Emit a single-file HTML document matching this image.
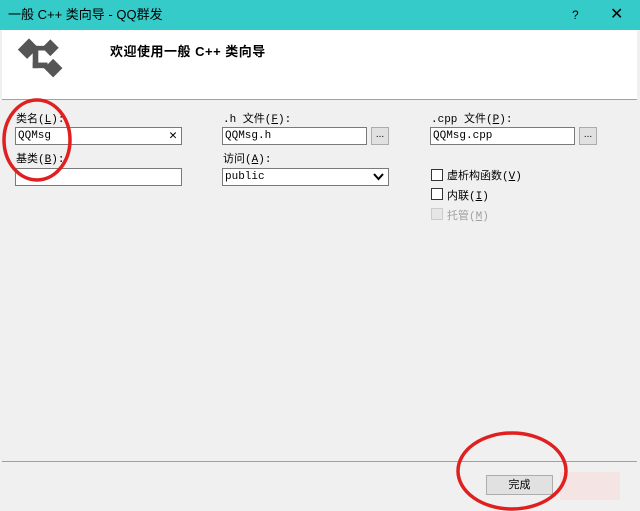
<!DOCTYPE html>
<html><head><meta charset="utf-8"><style>
*{margin:0;padding:0;box-sizing:border-box}
body{width:640px;height:511px;overflow:hidden;background:#f0f0f0;font-family:"Liberation Sans","Noto Sans CJK SC",sans-serif;font-size:12px;color:#000;position:relative}
.a{position:absolute}
.title{left:0;top:0;width:640px;height:30px;background:#35cbc9;color:#000;font-size:13px;line-height:30px;padding-left:8px}
.bl{left:0;top:30px;width:2px;height:481px;background:#35cbc9}
.head{left:2px;top:30px;width:635px;height:70px;background:#fff;border-bottom:1px solid #a0a0a0}
.lbl{font-size:11px;font-family:"Liberation Mono","Noto Sans CJK SC",monospace}
.inp{background:#fff;border:1px solid #7a7a7a;height:18px;font-size:11px;line-height:16px;padding-left:2px;font-family:"Liberation Mono","Noto Sans CJK SC",monospace}
.btn{background:#e1e1e1;border:1px solid #adadad;height:18px;width:18px;font-size:10px;text-align:center;line-height:14px}
.cb{width:12px;height:12px;border:1px solid #333;background:#fff}
</style></head><body>
<div class="a title">一般 C++ 类向导 - QQ群发<span class="a" style="left:572px;top:0;font-size:12px">?</span><span class="a" style="left:610px;top:0;font-size:16px">✕</span></div>
<div class="a head">
<svg class="a" style="left:14px;top:2px" width="52" height="50" viewBox="0 0 56 52">
<g fill="#555">
<polygon points="2,18 14,6 24,16 12,28"/>
<rect x="18" y="14" width="6" height="24"/>
<rect x="18" y="32" width="16" height="6"/>
<rect x="18" y="14" width="16" height="5"/>
<polygon points="28,16 37,7 46,16 37,25"/>
<polygon points="30,38 40,28 50,38 40,48"/>
</g></svg>
<div class="a" style="left:108px;top:11px;font-size:13px;font-weight:bold;letter-spacing:0.5px">欢迎使用一般 C++ 类向导</div>
</div>
<div class="a lbl" style="left:16px;top:110px">类名(<u>L</u>):</div>
<div class="a inp" style="left:15px;top:127px;width:167px">QQMsg<span class="a" style="right:4px;top:0;font-size:13px">✕</span></div>
<div class="a lbl" style="left:16px;top:150px">基类(<u>B</u>):</div>
<div class="a inp" style="left:15px;top:168px;width:167px"></div>
<div class="a lbl" style="left:223px;top:110px">.h 文件(<u>F</u>):</div>
<div class="a inp" style="left:222px;top:127px;width:145px">QQMsg.h</div>
<div class="a btn" style="left:371px;top:127px">...</div>
<div class="a lbl" style="left:223px;top:150px">访问(<u>A</u>):</div>
<div class="a inp" style="left:222px;top:168px;width:167px">public<svg class="a" style="right:4px;top:4px" width="11" height="8"><path d="M1 1 L5.5 6 L10 1" stroke="#000" stroke-width="2" fill="none"/></svg></div>
<div class="a lbl" style="left:431px;top:110px">.cpp 文件(<u>P</u>):</div>
<div class="a inp" style="left:430px;top:127px;width:145px">QQMsg.cpp</div>
<div class="a btn" style="left:579px;top:127px">...</div>
<div class="a cb" style="left:431px;top:169px"></div><div class="a lbl" style="left:447px;top:167px">虚析构函数(<u>V</u>)</div>
<div class="a cb" style="left:431px;top:188px"></div><div class="a lbl" style="left:447px;top:187px">内联(<u>I</u>)</div>
<div class="a cb" style="left:431px;top:208px;border-color:#ccc;background:#e6e6e6"></div><div class="a lbl" style="left:447px;top:207px;color:#a0a0a0">托管(<u>M</u>)</div>
<div class="a" style="left:2px;top:461px;width:635px;height:1px;background:#a0a0a0"></div>
<div class="a" style="left:486px;top:475px;width:67px;height:20px;background:#e1e1e1;border:1px solid #adadad;text-align:center;line-height:18px;font-size:11px">完成</div>
<div class="a" style="left:560px;top:472px;width:60px;height:28px;background:#f6dede;opacity:0.7"></div>
<svg class="a" style="left:0;top:0" width="640" height="511">
<ellipse cx="37" cy="140" rx="33" ry="40" fill="none" stroke="#e02020" stroke-width="3.5"/>
<ellipse cx="512" cy="471" rx="54" ry="38" fill="none" stroke="#e02020" stroke-width="3.5"/>
</svg>
</body></html>
